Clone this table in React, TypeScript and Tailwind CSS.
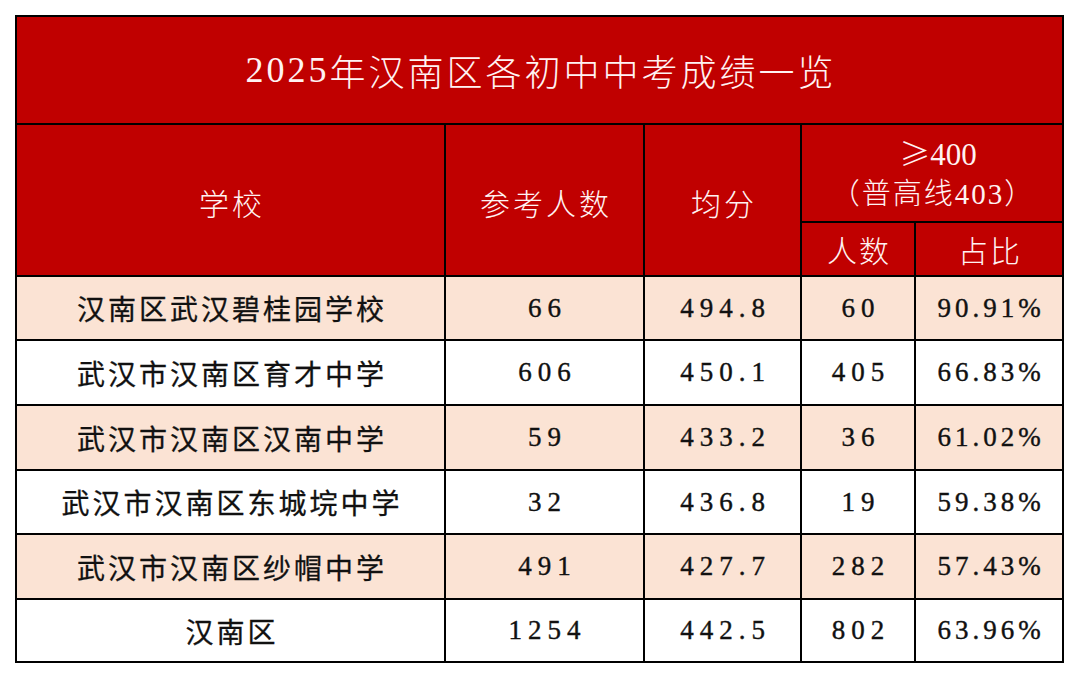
import React from "react";

type Row = { name: string; n: string; avg: string; cnt: string; pct: string; peach: boolean };

const rows: Row[] = [
  { name: "汉南区武汉碧桂园学校", n: "66", avg: "494.8", cnt: "60", pct: "90.91%", peach: true },
  { name: "武汉市汉南区育才中学", n: "606", avg: "450.1", cnt: "405", pct: "66.83%", peach: false },
  { name: "武汉市汉南区汉南中学", n: "59", avg: "433.2", cnt: "36", pct: "61.02%", peach: true },
  { name: "武汉市汉南区东城垸中学", n: "32", avg: "436.8", cnt: "19", pct: "59.38%", peach: false },
  { name: "武汉市汉南区纱帽中学", n: "491", avg: "427.7", cnt: "282", pct: "57.43%", peach: true },
  { name: "汉南区", n: "1254", avg: "442.5", cnt: "802", pct: "63.96%", peach: false },
];

const heights = ["h-[62px]", "h-[63px]", "h-[63px]", "h-[62px]", "h-[63px]", "h-[61px]"];

const serif = "font-['Liberation_Serif','DejaVu_Serif',serif]";
const cjk = "font-['Noto_Sans_CJK_SC',sans-serif]";
const head = "bg-[#c00000] flex items-center justify-center text-[#fff2f2] font-light font-['Noto_Sans_CJK_SC',sans-serif]";

export default function App() {
  return (
    <div className="w-[1080px] h-[677px] bg-white pt-[15px] pl-[15px] font-['Noto_Sans_CJK_SC',sans-serif]">
      <div className="w-[1049px] bg-black p-[2px] grid gap-[2px] grid-cols-[427px_197px_155px_112px_146px]">
        <div className={`${head} col-span-5 h-[106px] text-[36px] tracking-[3px] pl-[3px]`}>
          <span className="font-['Liberation_Serif','DejaVu_Serif',serif]">2025</span>年汉南区各初中中考成绩一览
        </div>

        <div className={`${head} row-span-2 text-[30px] tracking-[3px] pl-[3px] pt-[4px]`}>学校</div>
        <div className={`${head} row-span-2 text-[30px] tracking-[3px] pl-[3px] pt-[4px]`}>参考人数</div>
        <div className={`${head} row-span-2 text-[30px] tracking-[3px] pl-[3px] pt-[4px]`}>均分</div>
        <div className={`${head} col-span-2 h-[96px] flex-col leading-[36px]`}>
          <div className="text-[31px] pl-[12px]">
            ≥<span className="font-['Liberation_Serif','DejaVu_Serif',serif]">400</span>
          </div>
          <div className="text-[29px] tracking-[2px] pl-[2px]">
            （普高线<span className="font-['Liberation_Serif','DejaVu_Serif',serif]">403</span>）
          </div>
        </div>
        <div className={`${head} h-[52px] text-[30px] tracking-[2px] pl-[2px]`}>人数</div>
        <div className={`${head} h-[52px] text-[30px] tracking-[2px] pl-[2px]`}>占比</div>

        {rows.map((r, i) => {
          const bg = r.peach ? "bg-[#fbe3d4]" : "bg-white";
          const h = heights[i];
          const num = `${bg} ${h} ${serif} flex items-center justify-center text-[27px] text-[#111] [-webkit-text-stroke:0.4px_#111]`;
          return (
            <React.Fragment key={i}>
              <div className={`${bg} ${h} ${cjk} flex items-center justify-center text-[28px] tracking-[3px] pl-[3px] text-[#111] font-normal [-webkit-text-stroke:0.3px_#111]`}>
                {r.name}
              </div>
              <div className={`${num} tracking-[6px] pl-[6px]`}>{r.n}</div>
              <div className={`${num} tracking-[6px] pl-[6px]`}>{r.avg}</div>
              <div className={`${num} tracking-[6px] pl-[6px]`}>{r.cnt}</div>
              <div className={`${num} tracking-[4px] pl-[4px]`}>{r.pct}</div>
            </React.Fragment>
          );
        })}
      </div>
    </div>
  );
}
